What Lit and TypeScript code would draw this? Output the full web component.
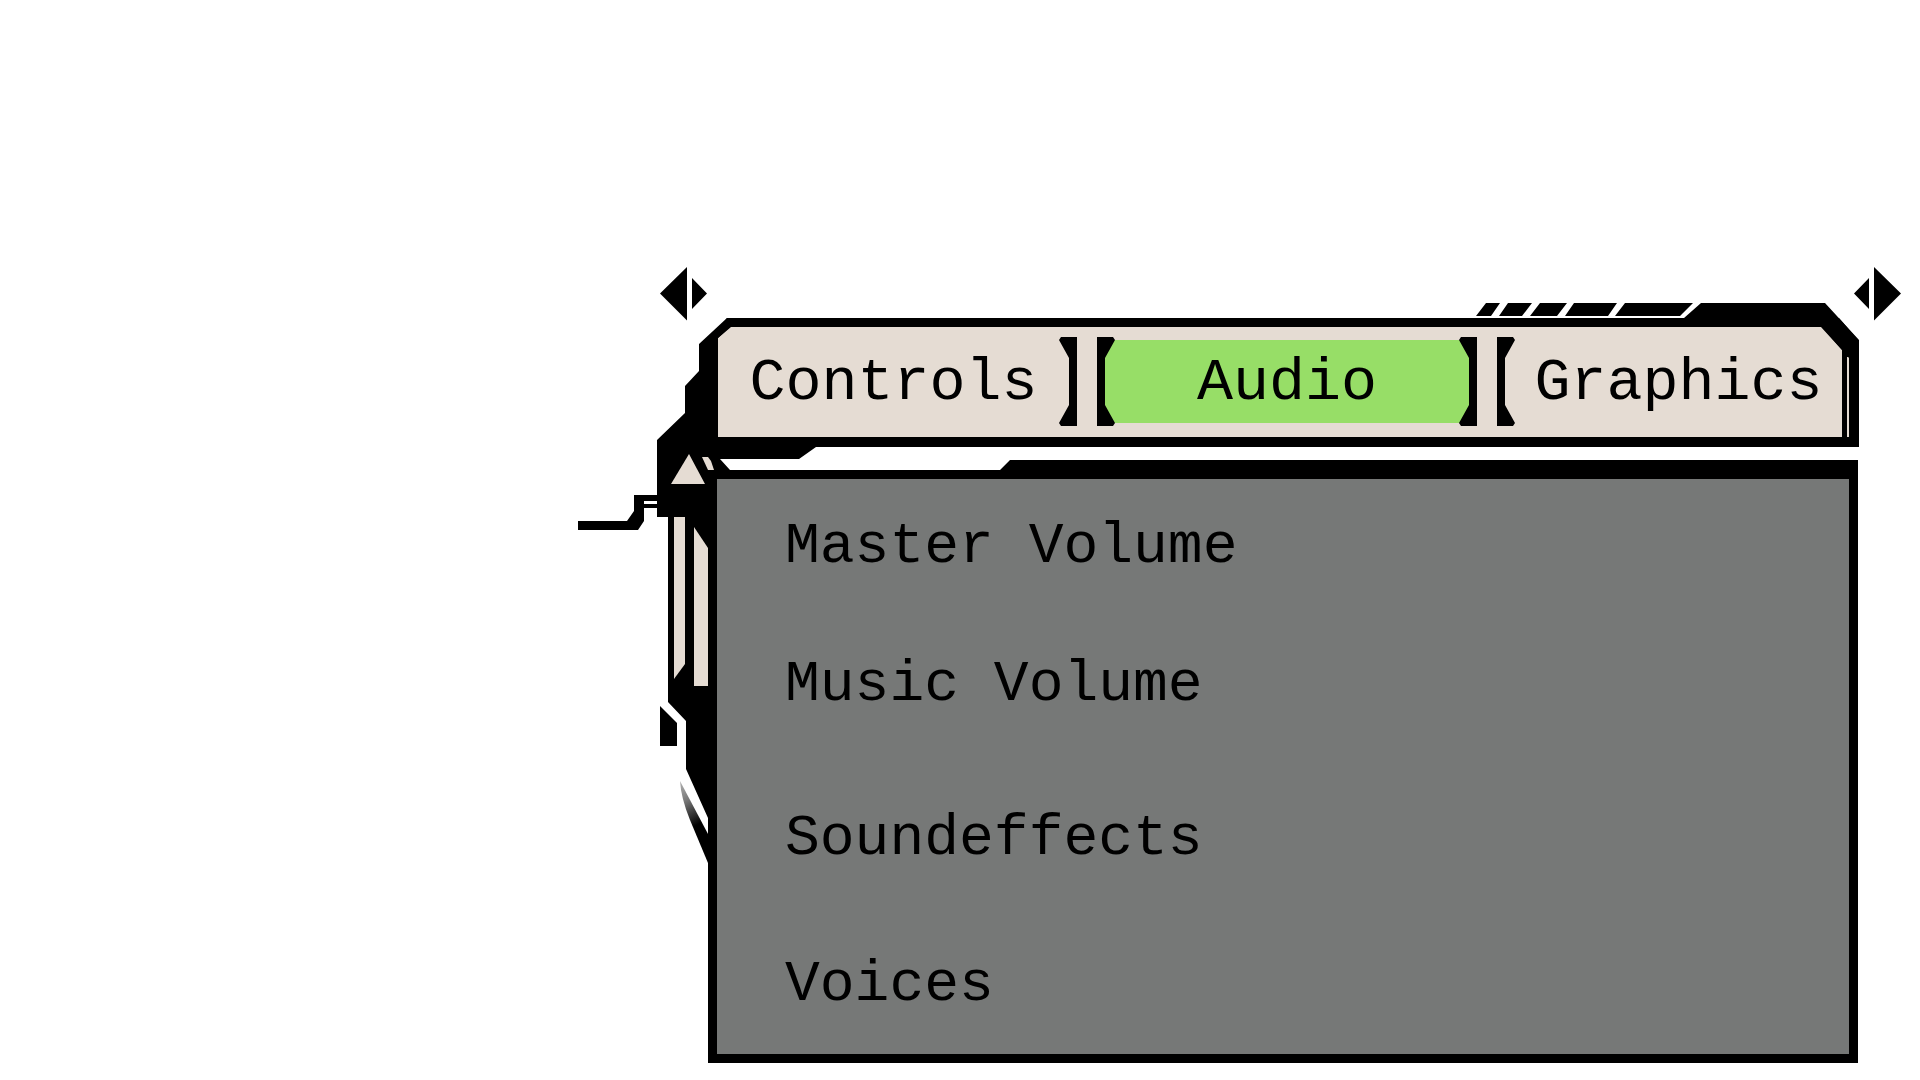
import { LitElement, html, css, svg } from "lit";
import { customElement, state } from "lit/decorators.js";
import { classMap } from "lit/directives/class-map.js";

const TABS = ["Controls", "Audio", "Graphics"];
const SETTINGS = ["Master Volume", "Music Volume", "Soundeffects", "Voices"];

@customElement("app-root")
export class AppRoot extends LitElement {
  static styles = css`
    :host {
      display: block;
      --ink: #000;
      --sand: #e5dcd3;
      --lime: #97de67;
      --slate: #767877;
      background: #fff;
      color: var(--ink);
      font-family: "Liberation Mono", "Courier New", monospace;
    }
    * {
      box-sizing: border-box;
    }
    svg {
      display: block;
      overflow: visible;
    }
    .page {
      display: flex;
      flex-direction: column;
      min-height: 100vh;
      padding: 267px 18px 17px 578px;
    }
    .arrows {
      display: flex;
      justify-content: space-between;
      height: 51px;
      padding-left: 82px;
    }
    button {
      margin: 0;
      padding: 0;
      border: 0;
      background: none;
      color: inherit;
      font: inherit;
      cursor: pointer;
    }
    .arrow {
      width: 48px;
      height: 54px;
    }
    .menu {
      flex: 1;
      display: flex;
      padding-right: 43px;
    }
    .side {
      flex: none;
      position: relative;
      z-index: 1;
      width: 130px;
      height: 552px;
      pointer-events: none;
    }
    .main {
      flex: 1;
      display: flex;
      flex-direction: column;
      gap: 13px;
    }
    .bar {
      position: relative;
    }
    .cap {
      position: absolute;
      top: -15px;
      right: 0;
      pointer-events: none;
    }
    .frame {
      padding: 9px 10px 10px;
      background: var(--ink);
      clip-path: polygon(19px 0, calc(100% - 20px) 0, 100% 23px, 100% 100%, 0 100%, 0 26px);
    }
    .tabs {
      display: grid;
      grid-template-columns: 359fr 380fr 345fr;
      gap: 20px;
      padding: 10px 7px 11px 0;
      background: var(--sand);
      clip-path: polygon(12px 0, calc(100% - 27px) 0, 100% 31px, 100% 100%, 0 100%, 0 11px);
    }
    .tab {
      display: flex;
      align-items: center;
      height: 89px;
      font-size: 60px;
      line-height: 68px;
    }
    .tab:first-child {
      padding-left: 10px;
    }
    .name {
      flex: 1;
      align-self: stretch;
      display: flex;
      align-items: center;
      justify-content: center;
      margin: 3px -10px;
      padding-top: 2px;
    }
    .active .name {
      background: var(--lime);
    }
    .bracket {
      flex: none;
      position: relative;
    }
    .panel {
      flex: 1;
      display: flex;
      margin-right: 1px;
      padding: 19px 9px 9px;
      background: var(--ink);
      clip-path: polygon(0 10px, 292px 10px, 302px 0, 100% 0, 100% 100%, 0 100%);
    }
    .settings {
      flex: 1;
      display: grid;
      grid-template-rows: 138px 154px 146px 1fr;
      margin: 0;
      padding: 35px 68px 0;
      background: var(--slate);
      list-style: none;
      font-size: 58px;
      line-height: 66px;
    }
  `;

  @state() private active = 1;

  private step(by: number) {
    this.active = (this.active + by + TABS.length) % TABS.length;
  }

  private bracket(flip: boolean) {
    const d = flip
      ? "M18 0H2L0 3L10 21V68L0 86L2 89H18Z"
      : "M0 0H16L18 3L8 21V68L18 86L16 89H0Z";
    return html`<svg class="bracket" width="18" height="89" viewBox="0 0 18 89" aria-hidden="true">
      <path d=${d} />
    </svg>`;
  }

  private side() {
    return html`<svg class="side" viewBox="578 318 130 552" aria-hidden="true">
      <defs>
        <linearGradient id="fade" gradientUnits="userSpaceOnUse" x1="680" y1="784" x2="702" y2="822">
          <stop offset="0" stop-color="#aaa" />
          <stop offset="0.4" stop-color="#777" />
          <stop offset="1" stop-color="#000" />
        </linearGradient>
      </defs>
      ${svg`
        <path d="M731 318H727L699 344V371L685 386V413L657 440V517H668V702L686 721V769L708 818V834H717V479H739V470H730L720 459H799L816 447H718V338L731 327Z" />
        <path d="M578 521H627L634 511V495H657V501H644V521L638 530H578ZM644 504H657V508H644Z" />
        <path d="M660 706L677 723V746H660Z" />
        <path fill="url(#fade)" d="M680 781L708 834V863L690 820Q681 798 680 781Z" />
        <g fill="#e5dcd3">
          <path d="M689 454L705 484H671Z" />
          <path d="M702 457H708L711 461L714 470H708Z" />
          <path d="M674 517H685V664L674 679Z" />
          <path d="M694 527L708 548V686H694Z" />
        </g>
      `}
    </svg>`;
  }

  private cap() {
    return html`<svg class="cap" width="383" height="144" viewBox="1476 303 383 144" aria-hidden="true">
      <path d="M1486 303H1500L1491 316H1476ZM1508 303H1532L1522 316H1499ZM1540 303H1567L1557 316H1530ZM1574 303H1617L1608 316H1565ZM1625 303H1693L1680 316H1615Z" />
      <path d="M1684 318L1701 303H1825L1859 340V357H1847V437H1842V350L1821 327H1684Z" />
    </svg>`;
  }

  render() {
    return html`
      <main class="page">
        <div class="arrows">
          <button class="arrow" aria-label="Previous tab" @click=${() => this.step(-1)}>
            <svg width="48" height="54" viewBox="0 0 48 54"><path d="M0 26.5L27 0V53.5ZM32 11L47 26.5L32 42Z" /></svg>
          </button>
          <button class="arrow" aria-label="Next tab" @click=${() => this.step(1)}>
            <svg width="48" height="54" viewBox="0 0 48 54"><path d="M47 26.5L20 0V53.5ZM15 11L0 26.5L15 42Z" /></svg>
          </button>
        </div>
        <div class="menu">
          ${this.side()}
          <div class="main">
            <div class="bar">
              <div class="frame">
                <div class="tabs" role="tablist">
                  ${TABS.map(
                    (name, i) => html`<button
                      class=${classMap({ tab: true, active: i === this.active })}
                      role="tab"
                      aria-selected=${i === this.active ? "true" : "false"}
                      @click=${() => (this.active = i)}
                    >
                      ${i > 0 ? this.bracket(false) : ""}
                      <span class="name">${name}</span>
                      ${i < TABS.length - 1 ? this.bracket(true) : ""}
                    </button>`
                  )}
                </div>
              </div>
              ${this.cap()}
            </div>
            <section class="panel" role="tabpanel" aria-label=${TABS[this.active]}>
              <ul class="settings">
                ${SETTINGS.map((name) => html`<li>${name}</li>`)}
              </ul>
            </section>
          </div>
        </div>
      </main>
    `;
  }
}
